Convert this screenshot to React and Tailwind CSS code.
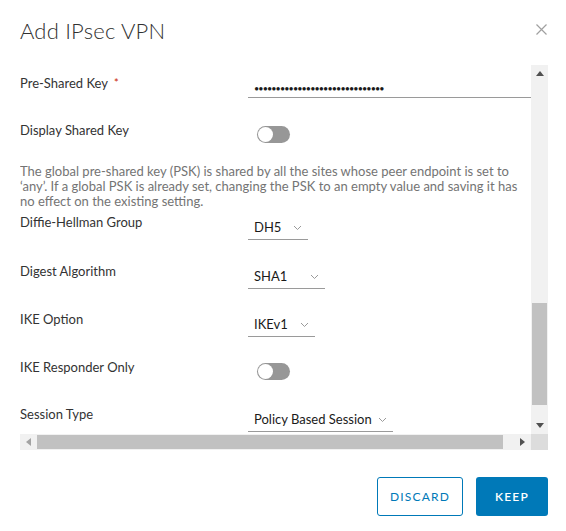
import React from 'react';

const font = "font-['Lato','Liberation_Sans',sans-serif]";

function Chevron({ className }) {
  return (
    <svg width="9" height="6" viewBox="0 0 9 6" className={className}>
      <path d="M1 1l3.5 3.5L8 1" fill="none" stroke="#9a9a9a" strokeWidth="1" />
    </svg>
  );
}

function Select({ value, width }) {
  return (
    <div className={`mt-0.5 h-6 flex items-center justify-between pl-[6px] pr-[6px] border-b border-[#9a9a9a] ${width}`}>
      <span className="text-[13px] text-[#1a1a1a]">{value}</span>
      <Chevron />
    </div>
  );
}

function Toggle() {
  return (
    <div className="ml-[9px] mt-[4px] w-[33px] h-[17px] rounded-full bg-[#979797] flex items-center pl-[1px]">
      <div className="w-[15px] h-[15px] rounded-full bg-white" />
    </div>
  );
}

function Row({ label, required, children, h }) {
  return (
    <div className={`flex items-start ${h}`}>
      <div className="w-[228px] shrink-0 text-[13px] leading-4 text-[#333]">
        {label}
        {required && <span className="text-[#c92100] ml-1.5 text-[11px] align-top">*</span>}
      </div>
      {children}
    </div>
  );
}

function Tri({ dir }) {
  const paths = {
    up: 'M0 5L4 0L8 5Z',
    down: 'M0 0L8 0L4 5Z',
    left: 'M5 0L5 8L0 4Z',
    right: 'M0 0L5 4L0 8Z',
  };
  const w = dir === 'up' || dir === 'down' ? 8 : 5;
  const h = dir === 'up' || dir === 'down' ? 5 : 8;
  return (
    <svg width={w} height={h} viewBox={`0 0 ${w} ${h}`}>
      <path d={paths[dir]} fill={dir === 'left' ? '#a3a3a3' : '#505050'} />
    </svg>
  );
}

export default function App() {
  return (
    <div className={`w-[566px] h-[531px] bg-white ${font}`}>
      <div className="flex items-start justify-between pl-5 pr-[19px] pt-[14px] h-[65px]">
        <h1 className="text-[22px] font-light text-[#313131] tracking-[0.2px]">Add IPsec VPN</h1>
        <svg width="11" height="11" viewBox="0 0 11 11" className="mt-[10px]">
          <path d="M0.5 0.5l10 10M10.5 0.5l-10 10" stroke="#a0a0a0" strokeWidth="1.2" />
        </svg>
      </div>

      <div className="ml-5 w-[528px] h-[385px] grid grid-cols-[1fr_17px] grid-rows-[1fr_16px]">
        <div className="overflow-hidden pt-[10px]">
          <Row label="Pre-Shared Key" required h="h-[47px]">
            <div className="w-[300px] h-[23px] border-b border-[#9a9a9a] flex items-end pl-[6px] pb-[4px]">
              <span className="text-[9px] leading-none tracking-[-0.9px] text-[#1a1a1a]">{'•'.repeat(30)}</span>
            </div>
          </Row>
          <Row label="Display Shared Key" h="h-[42px]">
            <Toggle />
          </Row>
          <p className="text-[13px] leading-[15px] text-[#747474] w-[500px] h-[50px]">
            The global pre-shared key (PSK) is shared by all the sites whose peer endpoint is set to ‘any’. If a global PSK is already set, changing the PSK to an empty value and saving it has no effect on the existing setting.
          </p>
          <Row label="Diffie-Hellman Group" h="h-[49px]">
            <Select value="DH5" width="w-[60px]" />
          </Row>
          <Row label="Digest Algorithm" h="h-[48px]">
            <Select value="SHA1" width="w-[77px]" />
          </Row>
          <Row label="IKE Option" h="h-[48px]">
            <Select value="IKEv1" width="w-[67px]" />
          </Row>
          <Row label="IKE Responder Only" h="h-[47px]">
            <Toggle />
          </Row>
          <Row label="Session Type" h="h-[48px]">
            <Select value="Policy Based Session" width="w-[145px]" />
          </Row>
        </div>

        <div className="bg-[#f1f1f1] flex flex-col items-center">
          <div className="h-[17px] flex items-center justify-center"><Tri dir="up" /></div>
          <div className="flex-1 w-full px-[1px] flex flex-col">
            <div className="h-[221px]" />
            <div className="h-[102px] bg-[#c1c1c1]" />
          </div>
          <div className="h-[17px] flex items-center justify-center"><Tri dir="down" /></div>
        </div>

        <div className="bg-[#f1f1f1] flex items-center">
          <div className="w-[17px] flex justify-center"><Tri dir="left" /></div>
          <div className="flex-1 h-full py-[1px]">
            <div className="h-full w-[466px] bg-[#c1c1c1]" />
          </div>
          <div className="w-[17px] flex justify-center"><Tri dir="right" /></div>
        </div>
        <div className="bg-[#dcdcdc]" />
      </div>

      <div className="flex justify-end gap-[13px] pr-[18px] mt-[27px]">
        <button className="w-[86px] h-[39px] rounded-[3px] border border-[#0079b8] text-[#0079b8] text-[12px] font-normal tracking-[1.2px]">
          DISCARD
        </button>
        <button className="w-[72px] h-[39px] rounded-[3px] bg-[#0079b8] text-white text-[12px] font-semibold tracking-[1.2px]">
          KEEP
        </button>
      </div>
    </div>
  );
}
